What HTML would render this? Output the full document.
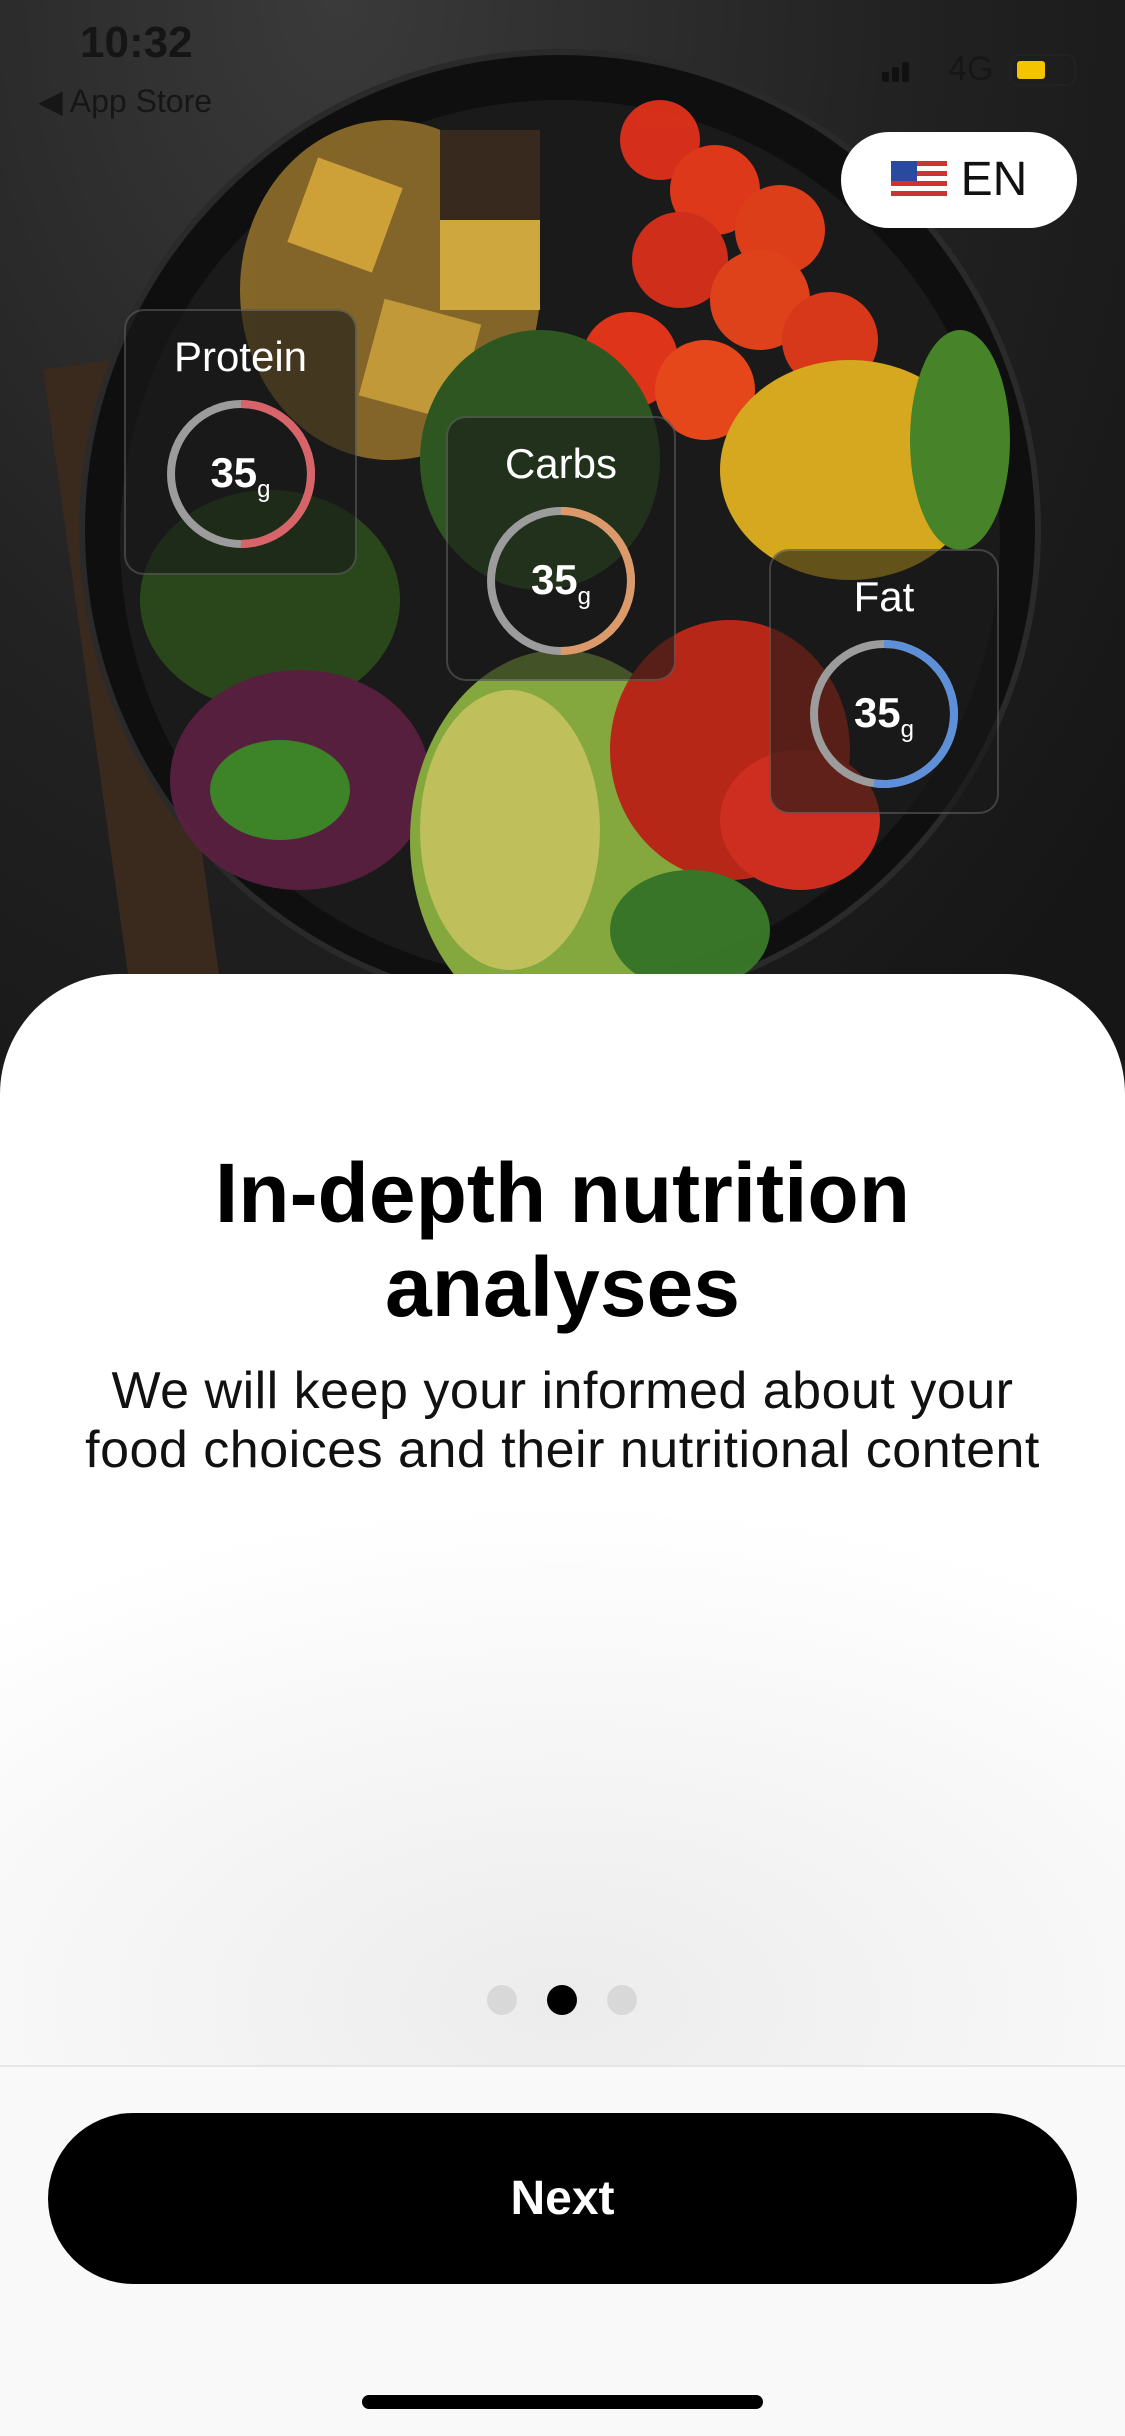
<!DOCTYPE html>
<html><head><meta charset="utf-8"><style>
*{margin:0;padding:0;box-sizing:border-box}
body{width:1125px;height:2436px;overflow:hidden;position:relative;font-family:"Liberation Sans",sans-serif;background:#1b1b1b}
.hero{position:absolute;left:0;top:0;width:1125px;height:1060px;background:radial-gradient(ellipse at 30% 0%,#3a3a3a,#222 50%,#161616 90%)}
.sb{position:absolute;color:#111;}
.card{position:absolute;border-radius:20px;background:rgba(25,25,25,.6);border:2px solid rgba(255,255,255,.18);color:#fff;text-align:center}
.card .l{font-size:42px;margin-top:22px}
.ring{position:absolute;left:50%;transform:translateX(-50%)}
.num{position:absolute;left:0;right:0;text-align:center;font-weight:bold;font-size:42px}
.num sub{font-size:24px;font-weight:normal;vertical-align:-10px}
.sheet{position:absolute;left:0;top:974px;width:1125px;height:1462px;border-radius:120px 120px 0 0;background:radial-gradient(ellipse 900px 500px at 50% 1030px,#ececec,#fdfdfd 90%,#fff)}
h1{position:absolute;top:1146px;left:0;width:1125px;text-align:center;font-size:84px;line-height:94px;font-weight:bold;color:#000}
.sub{position:absolute;top:1362px;left:0;width:1125px;text-align:center;font-size:52px;line-height:59px;color:#111;letter-spacing:0.5px}
.dot{position:absolute;top:1985px;width:30px;height:30px;border-radius:50%;background:#d8d8d8}
.bot{position:absolute;top:2065px;left:0;width:1125px;height:371px;background:#f9f9f9;border-top:2px solid #e6e6e6}
.btn{position:absolute;left:48px;top:2113px;width:1029px;height:171px;border-radius:86px;background:#000;color:#fff;font-weight:bold;font-size:48px;text-align:center;line-height:171px}
.home{position:absolute;left:362px;top:2395px;width:401px;height:14px;border-radius:7px;background:#000}
</style></head><body>
<div class="hero">
<svg width="1125" height="1060" style="position:absolute;left:0;top:0">
<rect x="90" y="360" width="90" height="700" fill="#3a2a1e" transform="rotate(-8 135 700)"/>
<circle cx="560" cy="530" r="478" fill="#0f0f0f" stroke="#2a2a2a" stroke-width="6"/>
<circle cx="560" cy="540" r="440" fill="#1a1a1a"/>
<g opacity=".95">
<ellipse cx="390" cy="290" rx="150" ry="170" fill="#8a6a2a"/>
<rect x="300" y="170" width="90" height="90" fill="#d8a83a" transform="rotate(20 345 215)"/>
<rect x="440" y="130" width="100" height="100" fill="#3a2a20"/>
<rect x="440" y="220" width="100" height="90" fill="#d8b040"/>
<rect x="370" y="310" width="100" height="100" fill="#caa03a" transform="rotate(15 420 360)"/>
<circle cx="660" cy="140" r="40" fill="#e0301a"/><circle cx="715" cy="190" r="45" fill="#e83a1a"/><circle cx="780" cy="230" r="45" fill="#e8401a"/>
<circle cx="680" cy="260" r="48" fill="#d8301a"/><circle cx="760" cy="300" r="50" fill="#e8451a"/><circle cx="830" cy="340" r="48" fill="#e33a1a"/>
<circle cx="630" cy="360" r="48" fill="#e8361a"/><circle cx="705" cy="390" r="50" fill="#f04a1a"/>
<ellipse cx="850" cy="470" rx="130" ry="110" fill="#e0b020"/>
<ellipse cx="960" cy="440" rx="50" ry="110" fill="#4a8a2a"/>
<ellipse cx="540" cy="460" rx="120" ry="130" fill="#2f5a22"/>
<ellipse cx="270" cy="600" rx="130" ry="110" fill="#2a4a1a"/>
<ellipse cx="300" cy="780" rx="130" ry="110" fill="#5a2040"/>
<ellipse cx="280" cy="790" rx="70" ry="50" fill="#3f8a2a"/>
<ellipse cx="560" cy="840" rx="150" ry="190" fill="#8ab040"/>
<ellipse cx="510" cy="830" rx="90" ry="140" fill="#c8c860"/>
<ellipse cx="730" cy="750" rx="120" ry="130" fill="#c02818"/>
<ellipse cx="800" cy="820" rx="80" ry="70" fill="#d83020"/>
<ellipse cx="690" cy="930" rx="80" ry="60" fill="#3a7a2a"/>
</g>
</svg>
<div class="sb" style="left:80px;top:18px;font-size:44px;font-weight:bold;color:#151515">10:32</div>
<div class="sb" style="left:38px;top:82px;font-size:32px;color:#161616">◀ App Store</div>
<div class="sb" style="left:882px;top:56px;width:36px;height:26px">
<div style="position:absolute;left:0;bottom:0;width:7px;height:10px;background:#111;border-radius:2px"></div>
<div style="position:absolute;left:10px;bottom:0;width:7px;height:15px;background:#111;border-radius:2px"></div>
<div style="position:absolute;left:20px;bottom:0;width:7px;height:20px;background:#111;border-radius:2px"></div>
<div style="position:absolute;left:30px;bottom:0;width:7px;height:26px;background:#222;border-radius:2px"></div></div>
<div class="sb" style="left:948px;top:50px;font-size:34px;color:#161616">4G</div>
<div class="sb" style="left:1010px;top:54px;width:66px;height:32px;border:2px solid #222;border-radius:9px"><div style="margin:5px;width:28px;height:18px;background:#f4c400;border-radius:3px"></div></div>
<div style="position:absolute;left:841px;top:132px;width:236px;height:96px;border-radius:48px;background:#fff;font-size:48px;line-height:96px;text-align:center;color:#111"><span style="display:inline-block;width:56px;height:36px;vertical-align:-2px;background:repeating-linear-gradient(#c33 0 5px,#fff 5px 10px);position:relative;margin-right:14px"><span style="position:absolute;left:0;top:0;width:26px;height:20px;background:#2a4aa0"></span></span>EN</div>

<div class="card" style="left:124px;top:309px;width:233px;height:266px">
<div class="l">Protein</div>
<svg class="ring" style="top:88px" width="150" height="150"><circle cx="75" cy="75" r="70" fill="none" stroke="#9c9c9c" stroke-width="8"/><circle cx="75" cy="75" r="70" fill="none" stroke="#d8646a" stroke-width="8" stroke-dasharray="220 500" transform="rotate(-90 75 75)"/></svg>
<div class="num" style="top:138px">35<sub>g</sub></div></div>

<div class="card" style="left:446px;top:416px;width:230px;height:265px">
<div class="l">Carbs</div>
<svg class="ring" style="top:88px" width="150" height="150"><circle cx="75" cy="75" r="70" fill="none" stroke="#9c9c9c" stroke-width="8"/><circle cx="75" cy="75" r="70" fill="none" stroke="#dc9a6a" stroke-width="8" stroke-dasharray="220 500" transform="rotate(-90 75 75)"/></svg>
<div class="num" style="top:138px">35<sub>g</sub></div></div>

<div class="card" style="left:769px;top:549px;width:230px;height:265px">
<div class="l">Fat</div>
<svg class="ring" style="top:88px" width="150" height="150"><circle cx="75" cy="75" r="70" fill="none" stroke="#9c9c9c" stroke-width="8"/><circle cx="75" cy="75" r="70" fill="none" stroke="#5e8fd9" stroke-width="8" stroke-dasharray="230 500" transform="rotate(-90 75 75)"/></svg>
<div class="num" style="top:138px">35<sub>g</sub></div></div>
</div>

<div class="sheet"></div>
<h1>In-depth nutrition<br>analyses</h1>
<div class="sub">We will keep your informed about your<br>food choices and their nutritional content</div>
<div class="dot" style="left:487px"></div>
<div class="dot" style="left:547px;background:#000"></div>
<div class="dot" style="left:607px"></div>
<div class="bot"></div>
<div class="btn">Next</div>
<div class="home"></div>
</body></html>
